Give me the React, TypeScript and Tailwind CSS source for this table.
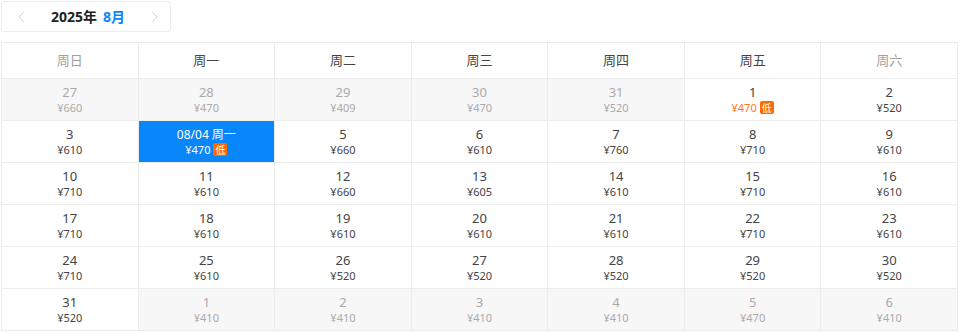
import { ChevronLeft, ChevronRight } from 'lucide-react'

type Day = {
    label: string
    price: number
    out?: boolean
    low?: boolean
    selected?: boolean
}

const weekdays = ['周日', '周一', '周二', '周三', '周四', '周五', '周六']

const rows: Day[][] = [
    [
        { label: '27', price: 660, out: true },
        { label: '28', price: 470, out: true },
        { label: '29', price: 409, out: true },
        { label: '30', price: 470, out: true },
        { label: '31', price: 520, out: true },
        { label: '1', price: 470, low: true },
        { label: '2', price: 520 },
    ],
    [
        { label: '3', price: 610 },
        { label: '08/04 周一', price: 470, low: true, selected: true },
        { label: '5', price: 660 },
        { label: '6', price: 610 },
        { label: '7', price: 760 },
        { label: '8', price: 710 },
        { label: '9', price: 610 },
    ],
    [
        { label: '10', price: 710 },
        { label: '11', price: 610 },
        { label: '12', price: 660 },
        { label: '13', price: 605 },
        { label: '14', price: 610 },
        { label: '15', price: 710 },
        { label: '16', price: 610 },
    ],
    [
        { label: '17', price: 710 },
        { label: '18', price: 610 },
        { label: '19', price: 610 },
        { label: '20', price: 610 },
        { label: '21', price: 610 },
        { label: '22', price: 710 },
        { label: '23', price: 610 },
    ],
    [
        { label: '24', price: 710 },
        { label: '25', price: 610 },
        { label: '26', price: 520 },
        { label: '27', price: 520 },
        { label: '28', price: 520 },
        { label: '29', price: 520 },
        { label: '30', price: 520 },
    ],
    [
        { label: '31', price: 520 },
        { label: '1', price: 410, out: true },
        { label: '2', price: 410, out: true },
        { label: '3', price: 410, out: true },
        { label: '4', price: 410, out: true },
        { label: '5', price: 470, out: true },
        { label: '6', price: 410, out: true },
    ],
]

function LowBadge() {
    return (
        <span className="ml-[3px] inline-flex h-[13px] w-[14px] items-center justify-center rounded-[2px] bg-[#ff6a00] text-[10px] leading-none text-white">
            低
        </span>
    )
}

function DayCell({ day }: { day: Day }) {
    // 選択中のセル
    if (day.selected) {
        return (
            <div className="flex h-[42px] flex-col items-center justify-center border-r border-b border-[#ececec] bg-[#0a86fb] pt-px text-white">
                <div className="text-[12px] leading-[15px]">{day.label}</div>
                <div className="flex items-center text-[11px] leading-[15px]">
                    ¥{day.price}
                    <LowBadge />
                </div>
            </div>
        )
    }

    return (
        <div
            className={`flex h-[42px] flex-col items-center justify-center border-r border-b border-[#ececec] pt-px ${
                day.out ? 'bg-[#f7f7f7]' : 'bg-white'
            }`}
        >
            <div className={`text-[13px] leading-[15px] ${day.out ? 'text-[#aaaaaa]' : 'text-[#444444]'}`}>{day.label}</div>
            <div
                className={`flex items-center text-[11px] leading-[15px] ${
                    day.out ? 'text-[#aaaaaa]' : day.low ? 'text-[#ff7a1a]' : 'text-[#444444]'
                }`}
            >
                ¥{day.price}
                {day.low && <LowBadge />}
            </div>
        </div>
    )
}

export default function App() {
    return (
        <div className="h-[332px] w-[960px] bg-white p-px font-['Noto_Sans','Noto_Sans_CJK_SC',sans-serif]">
            {/* 月切り替え */}
            <div className="flex h-[31px] w-[170px] items-center justify-between rounded-[3px] border border-[#ececec] pr-[6px] pl-[10px]">
                <ChevronLeft className="h-[18px] w-[18px] text-[#c8c8c8]" strokeWidth={1.25} />
                <div className="flex items-baseline gap-[6px]">
                    <span className="text-[14px] font-bold text-[#222222]">2025年</span>
                    <span className="text-[14px] font-bold text-[#0a86fb]">8月</span>
                </div>
                <ChevronRight className="h-[18px] w-[18px] text-[#c8c8c8]" strokeWidth={1.25} />
            </div>

            {/* カレンダー */}
            <div className="mt-[10px] grid w-[957px] grid-cols-7 border-t border-l border-[#ececec]">
                {weekdays.map((w, i) => (
                    <div
                        key={w}
                        className={`flex h-[36px] items-center justify-center border-r border-b border-[#ececec] text-[13px] ${
                            i === 0 || i === 6 ? 'text-[#a0a0a0]' : 'text-[#444444]'
                        }`}
                    >
                        {w}
                    </div>
                ))}
                {rows.flat().map((d, i) => (
                    <DayCell key={i} day={d} />
                ))}
            </div>
        </div>
    )
}
